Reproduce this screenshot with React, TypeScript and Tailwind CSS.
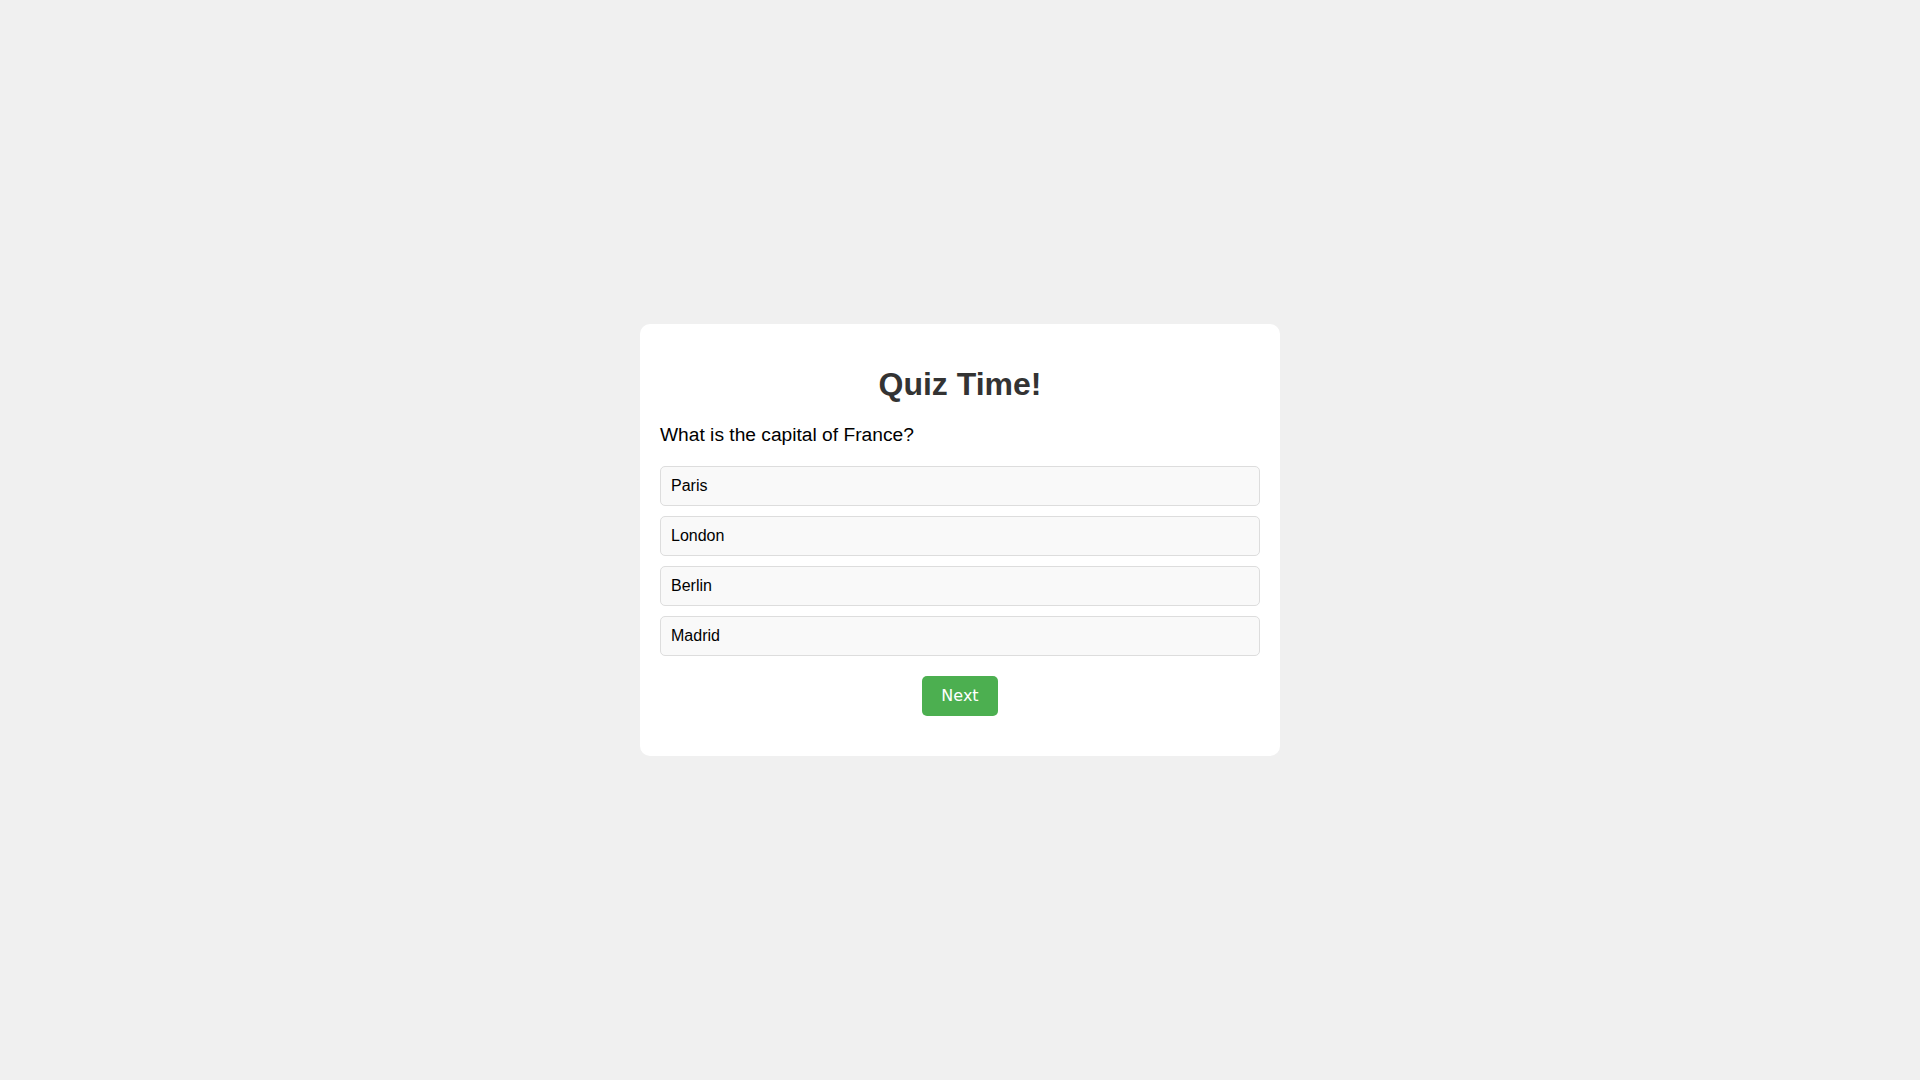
import { useState } from 'react';

const options = ['Paris', 'London', 'Berlin', 'Madrid'];

export default function App() {
    const [selected, setSelected] = useState<string | null>(null);

    return (
        <div className="flex min-h-screen items-center justify-center bg-[#f0f0f0] font-['Liberation_Sans',Arial,sans-serif]">
            <div className="w-[640px] rounded-[10px] bg-white px-[20px] pt-[20px] pb-[40px]">
                <h1 className="mt-[22.4px] mb-[20.5px] text-center text-[32px] leading-[36.8px] font-bold text-[#333]">
                    Quiz Time!
                </h1>
                <p className="mb-[20.6px] text-[19.2px] leading-[22.08px] text-black">
                    What is the capital of France?
                </p>
                <div className="flex flex-col gap-[10px]">
                    {options.map((option) => (
                        <button
                            key={option}
                            onClick={() => setSelected(option)}
                            className={
                                'flex h-[40px] items-center rounded-[5px] border border-[#ddd] px-[10px] text-left text-[16px] text-black ' +
                                (selected === option ? 'bg-[#e0e0e0]' : 'bg-[#f9f9f9]')
                            }
                        >
                            {option}
                        </button>
                    ))}
                </div>
                <div className="mt-[20px] flex justify-center">
                    <button className="h-[40px] w-[76px] rounded-[5px] bg-[#4caf50] font-['DejaVu_Sans',sans-serif] text-[16px] text-white">
                        Next
                    </button>
                </div>
            </div>
        </div>
    );
}
